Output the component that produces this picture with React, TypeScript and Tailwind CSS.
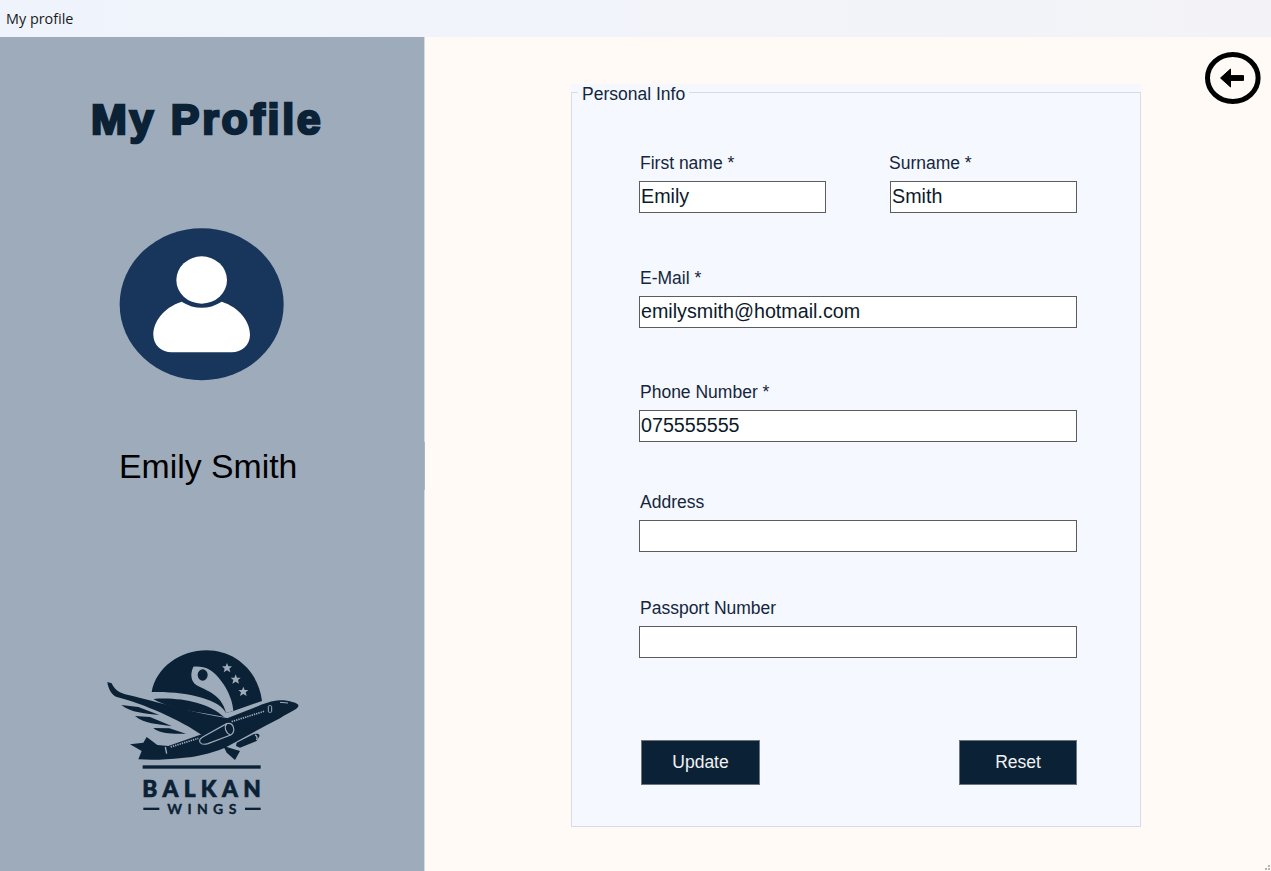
const font = "font-['Liberation_Sans',Arial,sans-serif]";

const Field = ({ label, value = '', width, labelShift = 'ml-px' }: { label: string; value?: string; width: string; labelShift?: string }) => (
  <label className={`block ${width}`}>
    <span className={`mb-[8px] block text-[17.5px] leading-[20px] text-[#14263d] ${labelShift}`}>{label}</span>
    <input
      readOnly
      value={value}
      className={`block h-[32px] w-full border border-[#5c5c5c] bg-white px-px pb-[2px] text-[19.7px] text-[#0b1a2b] outline-none ${font}`}
    />
  </label>
);

const Avatar = () => (
  <svg viewBox="0 0 600 570" className="block h-[190px] w-[200px]">
    <ellipse cx="305" cy="283" rx="246" ry="228" fill="#18355c" />
    <ellipse cx="305" cy="210" rx="76" ry="71" fill="#fff" />
    <path
      d="M245 275Q305 312 365 275C420 293 450 335 450 375C450 405 425 427 395 427L215 427C185 427 160 405 160 375C160 335 190 293 245 275Z"
      fill="#fff"
    />
  </svg>
);

const Logo = () => (
  <svg viewBox="0 0 720 600" className="block h-[200px] w-[240px]">
    <g fill="#0b2236">
      {/* dome */}
      <path d="M215 183C228 110 300 58 380 58C465 58 535 120 546 210L460 240L438 246C420 205 320 180 215 183Z" />
    </g>
    {/* swan neck */}
    <path
      d="M340 107C330 130 332 150 350 163C380 180 425 190 438 246L460 240C458 195 425 140 390 117C375 107 355 106 340 107Z"
      fill="#9eabbb"
    />
    <ellipse cx="368" cy="132" rx="15" ry="17" fill="#0b2236" />
    <g fill="#9eabbb">
      <path d="M441 96L445 106L456 106L448 113L451 124L441 118L431 124L434 113L426 106L437 106Z" />
      <path d="M467 130L471 140L482 140L474 147L477 158L467 152L457 158L460 147L452 140L463 140Z" />
      <path d="M490 167L494 177L505 177L497 184L500 195L490 189L480 195L483 184L475 177L486 177Z" />
    </g>
    <g fill="#0b2236">
      {/* wing and feathers */}
      <path d="M82 153L95 157C105 178 118 186 145 192C230 212 350 248 445 262L370 315C300 265 190 218 108 197C95 190 85 175 82 153Z" />
      <path d="M220 204C300 198 385 215 432 258C380 245 280 240 220 204Z" />
      <path d="M124 222L175 228L238 252C200 248 150 245 124 222Z" />
      <path d="M165 255L210 258L275 285C235 280 190 278 165 255Z" />
      <path d="M220 291L268 292L318 308C280 308 240 310 220 291Z" />
      {/* fuselage and tail */}
      <path d="M150 340L190 335L200 318L232 342L265 345L365 310L445 260L535 225C565 212 590 207 612 208C640 212 658 218 655 226C650 238 625 245 600 262L555 285L435 350C390 368 345 378 305 381C260 386 215 388 175 385L185 360Z" />
      {/* gear */}
      <path d="M430 345L480 360L465 387L440 365Z" />
      {/* outer engine */}
      <path d="M470 335L520 310C532 306 540 308 538 316L530 330L480 350L468 345Z" />
    </g>
    <g fill="none" stroke="#9eabbb">
      <path d="M368 318L440 278C462 272 468 302 452 312L384 338C358 345 352 328 368 318Z" strokeWidth="3.5" fill="#0b2236" />
      <path d="M440 278C432 288 436 306 452 312" strokeWidth="3.5" />
      <path d="M525 312C532 314 532 322 530 328" strokeWidth="4" />
      <path d="M272 348L355 322" strokeWidth="5" strokeDasharray="4 3" />
      <path d="M455 272L555 240" strokeWidth="5" strokeDasharray="4 3" />
      <rect x="565" y="224" width="10" height="20" rx="3" strokeWidth="3" />
      <path d="M256 348L260 368" strokeWidth="4" />
      <path d="M600 214L624 216" strokeWidth="3" />
    </g>
    <g fill="#0b2236" stroke="#0b2236">
      <rect x="188" y="403" width="354" height="10" strokeWidth="0" />
      <rect x="190" y="530" width="48" height="7" strokeWidth="0" />
      <rect x="495" y="530" width="47" height="7" strokeWidth="0" />
      <text x="187" y="498" textLength="355" lengthAdjust="spacing" fontSize="68" fontWeight="900" strokeWidth="2" fontFamily="Lato, sans-serif">BALKAN</text>
      <text x="262" y="548" textLength="207" lengthAdjust="spacing" fontSize="42" fontWeight="700" strokeWidth="1" fontFamily="Lato, sans-serif">WINGS</text>
    </g>
  </svg>
);

const BackIcon = () => (
  <svg viewBox="0 0 58 56" className="block h-[56px] w-[58px]">
    <ellipse cx="28.8" cy="28" rx="25.3" ry="23.5" fill="none" stroke="#000" strokeWidth="5" />
    <path d="M16.5 28L26.5 19V25.6L39.5 25.6V30.4L26.5 30.4V37Z" fill="#000" strokeLinejoin="round" stroke="#000" strokeWidth="1" />
  </svg>
);

export default function App() {
  return (
    <div className={`relative flex h-[871px] w-[1271px] flex-col overflow-hidden bg-[#fffaf5] ${font}`}>
      <div className="flex h-[37px] items-center bg-gradient-to-r from-[#eff4fc] to-[#f3f3f7] pl-[6px] font-['Open_Sans',sans-serif] text-[14.4px] text-[#1a1a1a]">
        My profile
      </div>
      <div className="flex flex-1">
        <aside className="relative flex w-[425px] flex-col border-r border-[#d5d9df] bg-[#9eabbb]">
          <h1 className="mt-[57px] ml-[91px] text-[43px] leading-[50px] font-black tracking-[2.7px] whitespace-nowrap text-[#0b2236] [-webkit-text-stroke:2.5px_#0b2236]">
            My Profile
          </h1>
          <div className="mt-[66px] ml-[100px]">
            <Avatar />
          </div>
          <p className="mt-[46px] ml-[119px] text-[33.8px] leading-[40px] text-black">Emily Smith</p>
          <div className="mt-[145px] ml-[80px]">
            <Logo />
          </div>
          <div className="absolute top-[405px] right-[-1px] h-[48px] w-px bg-[#a9b6c8]" />
        </aside>
        <main className="flex flex-1 items-start">
          <div className="mt-[47px] ml-[146px] w-[570px] bg-[#f5f8fe]">
            <fieldset className="h-[743px] border border-[#d8dce4]">
              <legend className="ml-[6px] h-[16px] px-[4px] text-[17.5px] leading-[20px] text-[#14263d]">Personal Info</legend>
              <div className="ml-[67px] flex w-[438px] flex-col pt-[53px]">
                <div className="flex justify-between">
                  <Field label="First name *" value="Emily" width="w-[187px]" />
                  <Field label="Surname *" value="Smith" width="w-[187px]" labelShift="-ml-px" />
                </div>
                <div className="mt-[55px]">
                  <Field label="E-Mail *" value="emilysmith@hotmail.com" width="w-full" />
                </div>
                <div className="mt-[54px]">
                  <Field label="Phone Number *" value="075555555" width="w-full" />
                </div>
                <div className="mt-[50px]">
                  <Field label="Address" width="w-full" />
                </div>
                <div className="mt-[46px]">
                  <Field label="Passport Number" width="w-full" />
                </div>
                <div className="mt-[82px] flex justify-between pl-[2px]">
                  <button className="h-[45px] w-[119px] border border-[#6b7580] bg-[#0a2136] text-[17.5px] text-[#f2f2f2]">Update</button>
                  <button className="h-[45px] w-[118px] border border-[#6b7580] bg-[#0a2136] text-[17.5px] text-[#f2f2f2]">Reset</button>
                </div>
              </div>
            </fieldset>
          </div>
          <div className="mt-[13px] ml-[63px]">
            <BackIcon />
          </div>
        </main>
      </div>
      {/* window resize grip */}
      <svg viewBox="0 0 8 8" className="absolute right-0 bottom-0 h-[8px] w-[8px]">
        <rect x="2" y="5" width="2" height="2" fill="#b5b5b5" />
        <rect x="5" y="5" width="2" height="2" fill="#b5b5b5" />
        <rect x="5" y="2" width="2" height="2" fill="#b5b5b5" />
      </svg>
    </div>
  );
}
